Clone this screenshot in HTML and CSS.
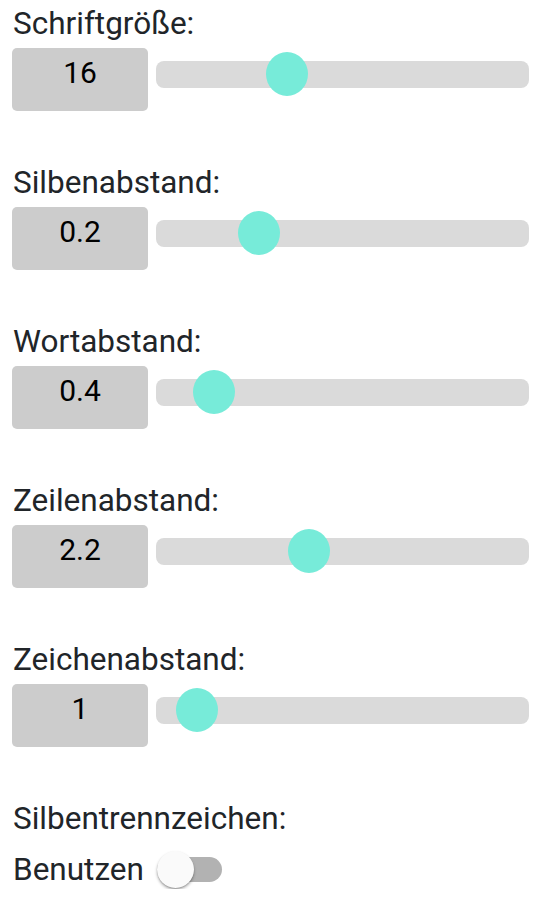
FILE: index.html
```html
<!DOCTYPE html>
<html lang="de">
<head>
<meta charset="utf-8">
<title>Einstellungen</title>
<link rel="stylesheet" href="styles.css">
</head>
<body>
<main class="settings">
  <section class="group">
    <div class="label">Schriftgröße:</div>
    <div class="row">
      <div class="value">16</div>
      <div class="slider"><div class="thumb" style="left:131px"></div></div>
    </div>
  </section>
  <section class="group">
    <div class="label">Silbenabstand:</div>
    <div class="row">
      <div class="value">0.2</div>
      <div class="slider"><div class="thumb" style="left:103px"></div></div>
    </div>
  </section>
  <section class="group">
    <div class="label">Wortabstand:</div>
    <div class="row">
      <div class="value">0.4</div>
      <div class="slider"><div class="thumb" style="left:58px"></div></div>
    </div>
  </section>
  <section class="group">
    <div class="label">Zeilenabstand:</div>
    <div class="row">
      <div class="value">2.2</div>
      <div class="slider"><div class="thumb" style="left:153px"></div></div>
    </div>
  </section>
  <section class="group">
    <div class="label">Zeichenabstand:</div>
    <div class="row">
      <div class="value">1</div>
      <div class="slider"><div class="thumb" style="left:40.5px"></div></div>
    </div>
  </section>
  <section class="group">
    <div class="label">Silbentrennzeichen:</div>
    <div class="toggle-row">
      <span class="toggle-label">Benutzen</span>
      <span class="switch"><span class="switch-track"></span><span class="switch-knob"></span></span>
    </div>
  </section>
</main>
</body>
</html>
```

FILE: styles.css
```css
html, body {
  margin: 0;
  padding: 0;
  background: #ffffff;
}

body {
  font-family: Roboto, "Noto Sans", "Liberation Sans", sans-serif;
  color: #212529;
}

.settings {
  display: flex;
  flex-direction: column;
  gap: 53px;
  padding: 5px 11px 0 12px;
}

.group {
  display: flex;
  flex-direction: column;
  gap: 6px;
}

.label {
  font-size: 31.5px;
  line-height: 37px;
  padding-left: 1px;
}

.row {
  display: flex;
  align-items: flex-start;
  gap: 8px;
}

.value {
  flex: 0 0 136px;
  height: 63px;
  box-sizing: border-box;
  padding-top: 8px;
  background: #cccccc;
  border-radius: 5px;
  text-align: center;
  font-size: 30px;
  line-height: 34px;
  color: #000000;
}

.slider {
  position: relative;
  flex: 1 1 auto;
  height: 27px;
  margin-top: 13px;
  background: #dadada;
  border-radius: 8px;
}

.thumb {
  position: absolute;
  top: -9px;
  width: 42px;
  height: 44px;
  margin-left: -21px;
  border-radius: 50%;
  background: #77ebd9;
}

.toggle-row {
  display: flex;
  align-items: center;
  gap: 13px;
  height: 40px;
  margin-top: 6px;
}

.toggle-label {
  font-size: 31.5px;
  line-height: 37px;
  padding-left: 1px;
}

.switch {
  position: relative;
  display: inline-block;
  width: 65px;
  height: 37px;
}

.switch-track {
  position: absolute;
  left: 0;
  top: 6px;
  width: 65px;
  height: 25px;
  border-radius: 12.5px;
  background: #b2b2b2;
}

.switch-knob {
  position: absolute;
  left: 0;
  top: 0;
  width: 37px;
  height: 37px;
  border-radius: 50%;
  background: #fafafa;
  box-shadow: 0 2px 3px rgba(0,0,0,0.3), 0 1px 1px rgba(0,0,0,0.15);
}
```
